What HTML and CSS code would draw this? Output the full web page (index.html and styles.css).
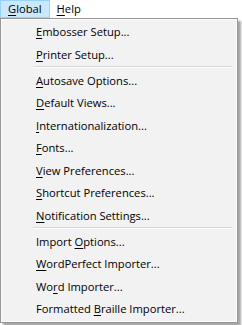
FILE: index.html
```html
<!DOCTYPE html>
<html lang="en">
<head>
  <meta charset="UTF-8" />
  <title>Global menu</title>
  <link rel="stylesheet" href="styles.css">
</head>
<body>
  <nav class="menubar">
    <span class="menu-title active"><u>G</u>lobal</span>
    <span class="menu-title"><u>H</u>elp</span>
  </nav>

  <div class="dropdown">
    <div class="item"><u>E</u>mbosser Setup...</div>
    <div class="item"><u>P</u>rinter Setup...</div>
    <div class="sep"></div>
    <div class="item"><u>A</u>utosave Options...</div>
    <div class="item"><u>D</u>efault Views...</div>
    <div class="item"><u>I</u>nternationalization...</div>
    <div class="item"><u>F</u>onts...</div>
    <div class="item"><u>V</u>iew Preferences...</div>
    <div class="item"><u>S</u>hortcut Preferences...</div>
    <div class="item"><u>N</u>otification Settings...</div>
    <div class="sep"></div>
    <div class="item">Import <u>O</u>ptions...</div>
    <div class="item"><u>W</u>ordPerfect Importer...</div>
    <div class="item">Wo<u>r</u>d Importer...</div>
    <div class="item">Formatted <u>B</u>raille Importer...</div>
  </div>
</body>
</html>
```

FILE: styles.css
```css
* {
  margin: 0;
  padding: 0;
  box-sizing: border-box;
}

body {
  font-family: 'Open Sans', 'Noto Sans', sans-serif;
  font-size: 11.2px;
  color: #000;
  background: #fff;
  width: 242px;
  height: 325px;
  overflow: hidden;
}

u {
  text-decoration-thickness: 1px;
  text-underline-offset: 2px;
}

.menubar {
  display: flex;
  height: 18px;
  background: #fff;
}

.menu-title {
  display: flex;
  align-items: center;
  padding: 0 6px;
  border: 1px solid transparent;
  line-height: 16px;
}

.menu-title.active {
  background: #cce8ff;
  border-color: #99d1ff;
  padding: 0 7px 0 7px;
}

.dropdown {
  width: 238px;
  height: 305px;
  background: #f2f2f2;
  border: 1px solid #979797;
  padding: 2px 2px 0;
  box-shadow: inset 0 0 0 1px #fcfcfc, 3px 3px 2px rgba(0, 0, 0, 0.35);
}

.item {
  height: 22.5px;
  line-height: 22.5px;
  padding-left: 33px;
  white-space: nowrap;
}

.sep {
  height: 3.5px;
  margin-left: 30px;
  margin-right: 3px;
  display: flex;
  flex-direction: column;
}

.sep::before {
  content: "";
  height: 1px;
  background: #d7d7d7;
}

.sep::after {
  content: "";
  height: 1px;
  background: #fff;
}
```
